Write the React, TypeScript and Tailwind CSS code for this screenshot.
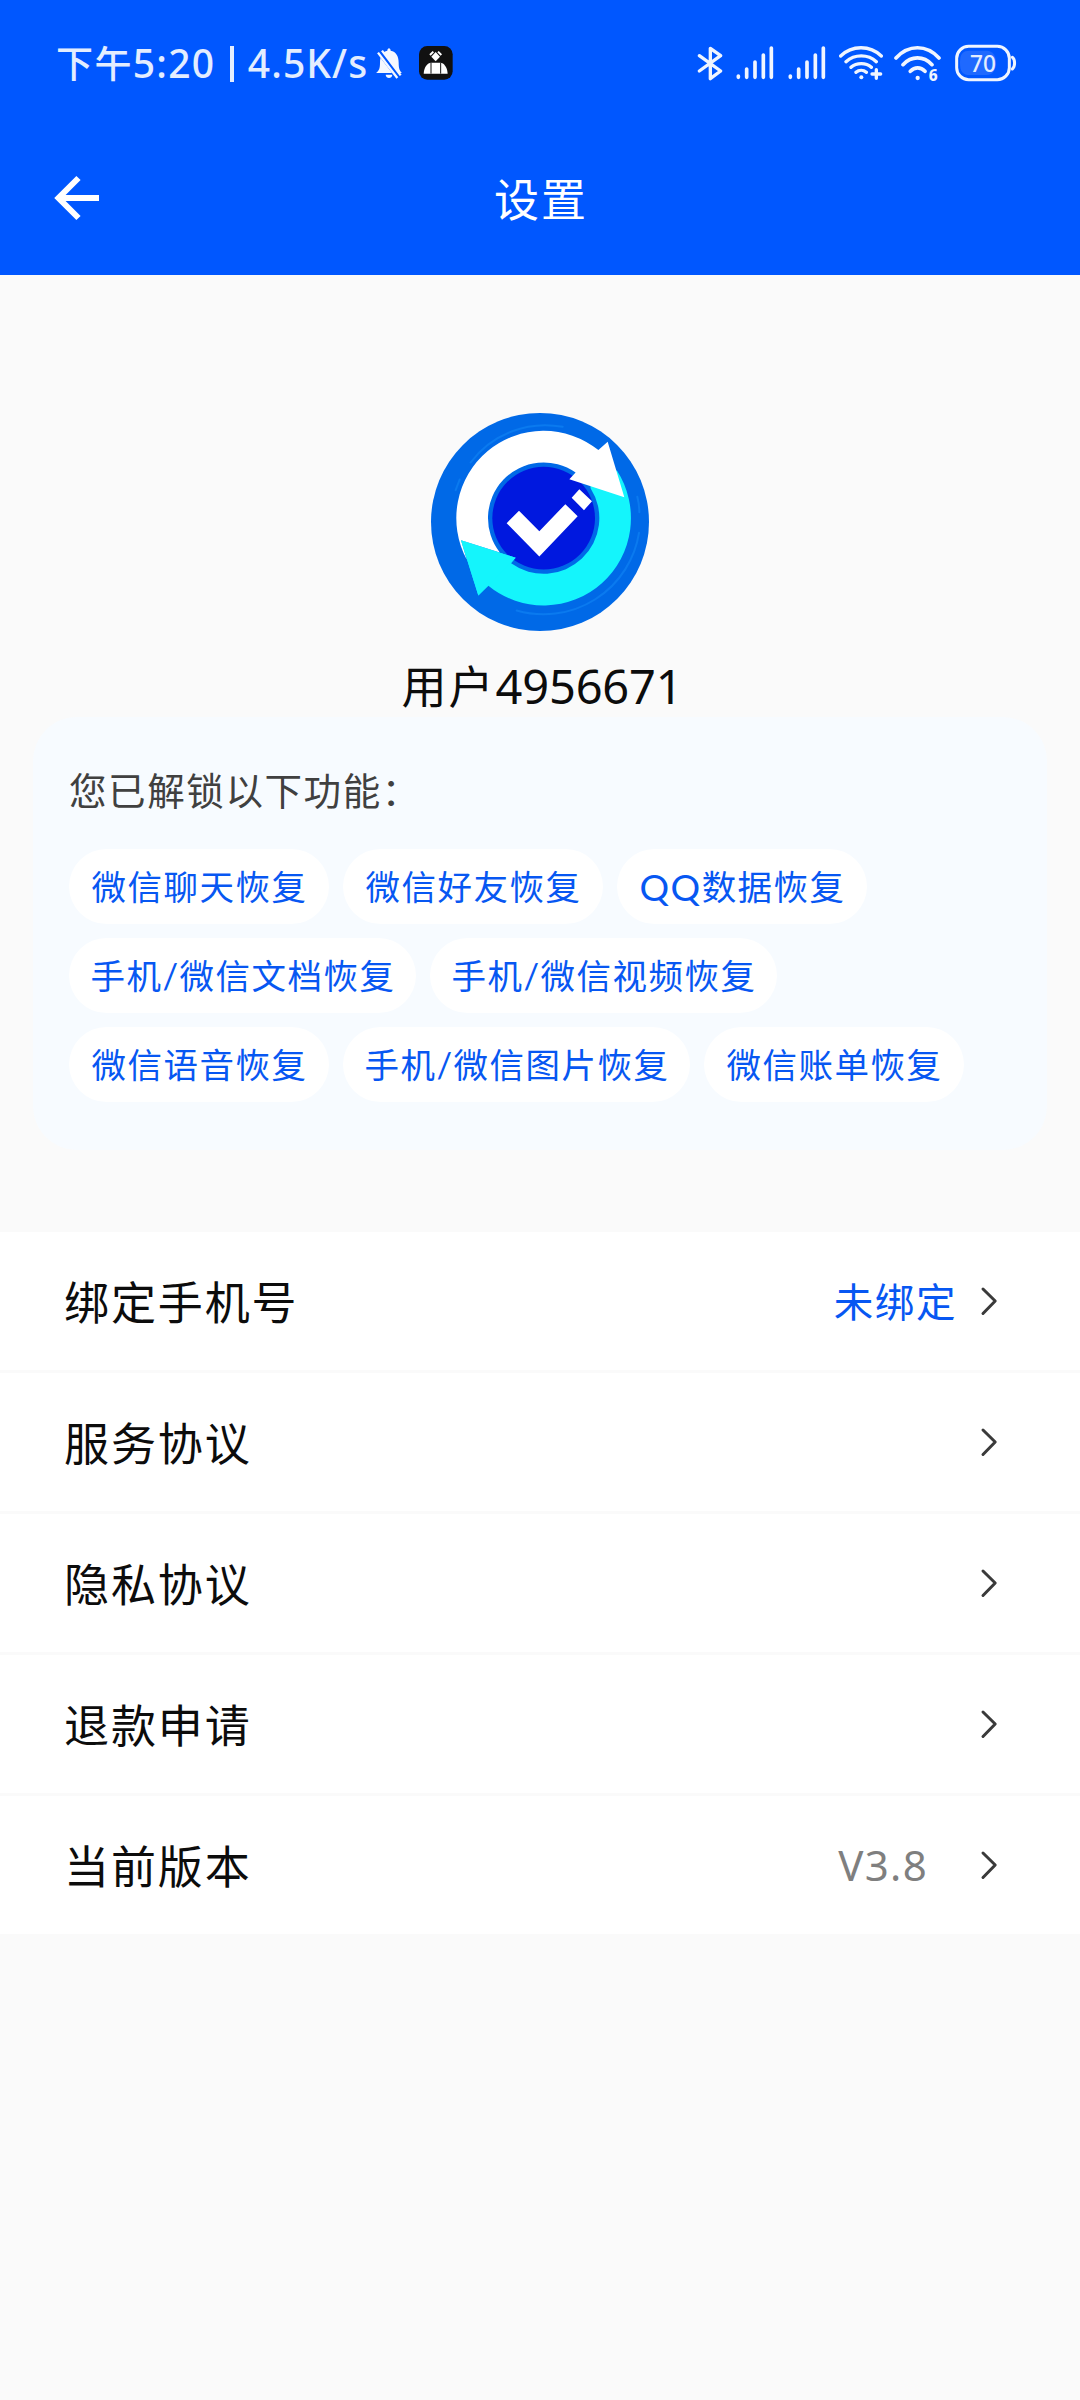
import React from "react";

const unlocked = [
  [
    { label: "微信聊天恢复", width: "w-[260px]" },
    { label: "微信好友恢复", width: "w-[260px]" },
    { label: "QQ数据恢复", width: "w-[250px]" },
  ],
  [
    { label: "手机/微信文档恢复", width: "w-[347px]" },
    { label: "手机/微信视频恢复", width: "w-[347px]" },
  ],
  [
    { label: "微信语音恢复", width: "w-[260px]" },
    { label: "手机/微信图片恢复", width: "w-[347px]" },
    { label: "微信账单恢复", width: "w-[260px]" },
  ],
];

function Signal({ className }: { className: string }) {
  return (
    <svg className={className} viewBox="0 0 114 210" fill="none" stroke="#f0f5ff" strokeWidth="11" strokeLinecap="round">
      <path d="M7 138v4M32 117v25M57 96v46M82 75v67M106 54v88" />
    </svg>
  );
}

function StatusBar() {
  return (
    <div className="flex h-[130px] items-start pt-[30px] pl-[56px] text-[#e3edff]">
      <div className="flex h-[70px] w-[313px] items-center text-[37px] font-medium">
        <span className="pb-[3px] tracking-[1.4px]">下午</span>
        <span className="w-[97px] pb-[3px] text-[39px] tracking-[1.2px]">5:20</span>
        <span className="-mt-[2px] h-[36px] w-[4px] bg-[#e3edff]" />
        <span className="ml-[14px] pb-[3px] text-[39px] tracking-[1.1px]">4.5K/s</span>
      </div>
      <svg className="ml-[7px] h-[70px] w-[26px]" viewBox="1008 0 78 210">
        <path d="M1008 129c9-7 12-14 12-31 0-21 8-33 22-36 0-10 10-10 10 0 16 3 24 16 24 36 0 17 3 24 10 31z" fill="#f5f8ff" />
        <path d="M1037 134h20c-1 13-19 13-20 0z" fill="#f5f8ff" />
        <path d="M1017 63l62 82" stroke="#0057ff" strokeWidth="17" />
        <path d="M1014 68l58 76M1026 62l56 74" stroke="#f5f8ff" strokeWidth="7" />
      </svg>
      <svg className="ml-[17px] h-[70px] w-[34px]" viewBox="1138 0 102 210">
        <rect x="1138" y="48" width="101" height="101" rx="25" fill="#111111" />
        <path d="M1152 131c1-20 12-33 22-33h28c11 0 21 14 22 33z" fill="#fff" />
        <path d="M1174 98v33M1203 98v33" stroke="#111111" strokeWidth="3" />
        <path d="M1188 66l13 14-13 14-13-14z" fill="#fff" />
        <path d="M1171 75l10-10M1205 75l-10-10" stroke="#fff" strokeWidth="6" />
      </svg>

      <svg className="ml-[244px] h-[70px] w-[26px]" viewBox="52 0 78 210" fill="none" stroke="#f0f5ff" strokeWidth="10" strokeLinecap="round" strokeLinejoin="round">
        <path d="M59 77l64 46-31 23V55l31 22-64 46" />
      </svg>
      <Signal className="ml-[13px] h-[70px] w-[38px]" />
      <Signal className="ml-[14px] h-[70px] w-[38px]" />
      <svg className="ml-[13px] h-[70px] w-[45px]" viewBox="475 0 135 210" fill="none" stroke="#f0f5ff" strokeWidth="10" strokeLinecap="round">
        <path d="M480 78c34-33 88-33 122 0M496 95c26-23 66-23 91 0M511 112c17-15 45-15 61 0M526 127c9-8 22-8 31 0" />
        <path d="M574 132h26M587 119v26" />
        <circle cx="542" cy="142" r="6" fill="#f0f5ff" stroke="none" />
      </svg>
      <svg className="ml-[10px] h-[70px] w-[48px]" viewBox="641 0 144 210" fill="none" stroke="#f0f5ff" strokeWidth="11" strokeLinecap="round">
        <path d="M647 84c37-41 92-41 129 0M668 104c25-27 62-27 87 0M690 124c13-14 31-14 44 0" />
        <circle cx="712" cy="144" r="6.500" fill="#f0f5ff" stroke="none" />
        <text x="745" y="152" fontSize="46" fontWeight="800" fontFamily="Noto Sans" fill="#f0f5ff" stroke="none">6</text>
      </svg>
      <svg className="ml-[13px] h-[70px] w-[62px]" viewBox="823 0 186 210" fill="none">
        <path d="M868 62h50c19 0 28 16 28 36s-9 37-28 37h-50c-22 0-30-10-30-37s8-36 30-36z" fill="#1f69ff" />
        <rect x="828" y="49" width="158" height="100" rx="36" stroke="#f0f5ff" strokeWidth="9" />
        <path d="M995 82c9 6 9 28 0 35" stroke="#f0f5ff" strokeWidth="9" strokeLinecap="round" />
        <text x="907" y="125" textAnchor="middle" fontSize="68" fontWeight="500" fontFamily="Noto Sans" fill="#e3edff">70</text>
      </svg>
    </div>
  );
}

function Logo() {
  return (
    <svg className="size-[218px]" viewBox="63 38.500 654 654">
      <circle cx="390" cy="365.500" r="327" fill="#0069e7" />
      <g fill="none" stroke="#0a7aef" strokeWidth="6" strokeLinecap="round">
        <path d="M182 187A280 280 0 0 1 458 80M137 270l12-32M682 290q6 24 6 46M687 398A290 290 0 0 1 320 631" />
      </g>
      <circle cx="401" cy="354" r="154" fill="#0018df" />
      <path d="M541 250L620.700 211.300A262 262 0 0 1 235.100 556.700L205 586L153 420L317 473L303.300 489.400A167 167 0 0 0 541.700 264Z" fill="#14f5fc" />
      <path d="M170.500 478.600A262 262 0 0 1 565.200 149.800L593 125L643 291L478 237L496.800 217.200A167 167 0 0 0 269.400 456.800L153 420Z" fill="#fff" />
      <path d="M153 420L317 473L205 586Z" fill="#14f5fc" />
      <path d="M327 332l61 61 78-81 37 36-115 121-98-100zM508 267l38 36-24 27-37-37z" fill="#fff" />
    </svg>
  );
}

function Row({ label, value }: { label: string; value?: React.ReactNode }) {
  return (
    <div className="flex h-[138px] items-center bg-white pr-[82px] pl-[64px]">
      <span className="flex-1 pt-[3px] text-[45px] leading-[60px] tracking-[1.9px] text-[#0c0c0c]">{label}</span>
      {value}
      <svg className="h-[30px] w-[18px]" viewBox="0 0 18 30" fill="none" stroke="#3a3a3a" strokeWidth="3" strokeLinecap="round" strokeLinejoin="round">
        <path d="M3 3l12.200 12L3 27.500" />
      </svg>
    </div>
  );
}

export default function App() {
  return (
    <div className="h-[2400px] w-[1080px] overflow-hidden bg-[#fafafa] font-['Noto_Sans','Noto_Sans_CJK_SC',sans-serif] whitespace-nowrap">
      <header className="h-[275px] bg-[#0057ff]">
        <StatusBar />
        <div className="grid h-[136px] grid-cols-3 items-center text-white">
          <svg className="ml-[53px] h-[48px] w-[48px]" viewBox="0 0 48 48" fill="none" stroke="#fff" strokeWidth="6">
            <path d="M25.500 4L5.500 24l20 20M6 24h40" />
          </svg>
          <h1 className="pt-[4px] pl-[2px] text-center text-[45px] leading-[60px] tracking-[2px]">设置</h1>
        </div>
      </header>

      <main>
        <section className="flex h-[442px] flex-col items-center pt-[138px]">
          <Logo />
          <div className="mt-[25px] flex items-center pl-[4px] text-[45px] leading-[60px] text-[#0c0c0c]">
            <span className="tracking-[2px]">用户</span>
            <span className="pb-[1px] text-[47px] tracking-[-0.2px]">4956671</span>
          </div>
        </section>

        <section className="mx-[33px] h-[433px] rounded-[44px] bg-[#f7fbff] pt-[46px] pl-[36px]">
          <h2 className="h-[86px] text-[37.500px] leading-[56px] tracking-[1.600px] text-[#404040]">您已解锁以下功能：</h2>
          <div className="flex flex-col gap-[14px]">
            {unlocked.map((line, i) => (
              <div key={i} className="flex gap-[14px]">
                {line.map((chip) => (
                  <span
                    key={chip.label}
                    className={`${chip.width} flex h-[75px] items-center justify-center rounded-full bg-white pt-[1px] pl-[1px] font-['Lato','Noto_Sans_CJK_SC',sans-serif] text-[34.500px] leading-[50px] tracking-[1.500px] text-[#0757f2]`}
                  >
                    {chip.label.startsWith("QQ") ? (
                      <>
                        <span className="pb-[1px] text-[37px] font-normal">QQ</span>
                        {chip.label.slice(2)}
                      </>
                    ) : (
                      chip.label
                    )}
                  </span>
                ))}
              </div>
            ))}
          </div>
        </section>

        <section className="mt-[82px] flex flex-col gap-[3px]">
          <Row
            label="绑定手机号"
            value={<span className="mr-[23px] pt-[2px] text-[39.500px] leading-[56px] tracking-[1.600px] text-[#0757f2]">未绑定</span>}
          />
          <Row label="服务协议" />
          <Row label="隐私协议" />
          <Row label="退款申请" />
          <Row label="当前版本" value={<span className="mr-[52px] text-[42px] leading-[56px] tracking-[1.3px] text-[#7f7f7f]">V3.8</span>} />
        </section>
      </main>
    </div>
  );
}
